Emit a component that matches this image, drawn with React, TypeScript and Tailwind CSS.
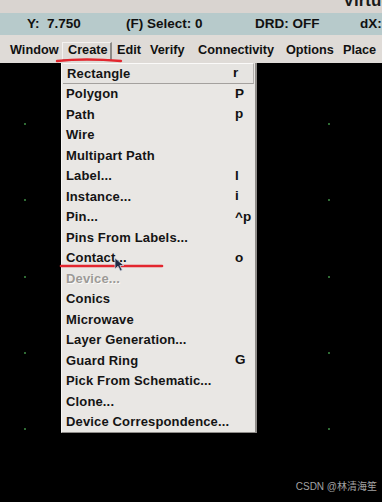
import React from "react";

type Item = { label: string; key?: string; disabled?: boolean; active?: boolean };

const items: Item[] = [
  { label: "Rectangle", key: "r", active: true },
  { label: "Polygon", key: "P" },
  { label: "Path", key: "p" },
  { label: "Wire" },
  { label: "Multipart Path" },
  { label: "Label...", key: "l" },
  { label: "Instance...", key: "i" },
  { label: "Pin...", key: "^p" },
  { label: "Pins From Labels..." },
  { label: "Contact...", key: "o" },
  { label: "Device...", disabled: true },
  { label: "Conics" },
  { label: "Microwave" },
  { label: "Layer Generation..." },
  { label: "Guard Ring", key: "G" },
  { label: "Pick From Schematic..." },
  { label: "Clone..." },
  { label: "Device Correspondence..." },
];

const dotsX = [24, 328];
const dotsY = [123, 199, 276, 352, 428];

const App: React.FC = () => {
  return (
    <div className="relative w-[382px] h-[502px] overflow-hidden bg-black font-['Liberation_Sans',Arial,sans-serif] font-bold text-[#111]">
      {/* title strip */}
      <div className="h-[13px] bg-[#d9d4d0] overflow-hidden">
        <div className="ml-[343px] -mt-[9px] whitespace-nowrap text-[17px] leading-[20px] text-[#1a1a1a]">Virtuoso</div>
      </div>

      {/* status line */}
      <div className="flex items-center h-[22px] bg-[#b7cacb] pl-[27px] text-[13.5px] whitespace-nowrap overflow-hidden">
        <span className="w-[99px] shrink-0">Y: &nbsp;7.750</span>
        <span className="w-[129px] shrink-0">(F) Select: 0</span>
        <span className="w-[105px] shrink-0">DRD: OFF</span>
        <span className="shrink-0">dX:</span>
      </div>

      {/* menu bar */}
      <div className="flex items-center h-[28px] bg-[#dfdbd7] pl-[10px] pt-[4px] text-[12.7px] whitespace-nowrap">
        <span className="w-[52px] shrink-0">Window</span>
        <span className="w-[50px] h-[18px] shrink-0 flex items-center pl-[5px] border-t border-l border-[#f4f2f0] border-r-2 border-r-[#8d8a87] border-b border-b-[#9c9996]">Create</span>
        <span className="ml-[5px] w-[33px] shrink-0">Edit</span>
        <span className="w-[48px] shrink-0">Verify</span>
        <span className="w-[88px] shrink-0">Connectivity</span>
        <span className="w-[57px] shrink-0">Options</span>
        <span className="shrink-0">Place</span>
      </div>

      {/* canvas grid dots */}
      {dotsY.map((y) =>
        dotsX.map((x) => (
          <div key={`${x}-${y}`} className="absolute w-[2px] h-[2px] bg-[#2f6a34]" style={{ left: x, top: y }} />
        ))
      )}

      {/* red annotation under Create */}
      <svg className="absolute left-[55px] top-[56px]" width="68" height="8" viewBox="0 0 68 8">
        <path d="M2 5 Q 30 2 66 5" stroke="#e3262e" strokeWidth="2.4" fill="none" strokeLinecap="round" />
      </svg>

      {/* Create dropdown */}
      <div className="absolute left-[61px] top-[63px] w-[196px] bg-[#e9e7e4] border-l border-[#f6f5f3] border-r-2 border-r-[#8f8c89] border-b border-b-[#8f8c89] text-[13px]">
        {items.map((it) => (
          <div
            key={it.label}
            className={
              "flex items-center h-[20.5px] pl-[4px] whitespace-nowrap " +
              (it.active
                ? "bg-[#e6e4e1] border-t border-[#fbfaf9] border-b border-b-[#a4a19e] border-r border-r-[#b3b0ad] mx-[1px]"
                : "")
            }
          >
            <span
              className={
                "flex-1 tracking-[0.15px] " +
                (it.disabled ? "text-[#9c9a97] [text-shadow:1px_1px_0_#fbfaf8]" : "text-[#141414]")
              }
            >
              {it.label}
            </span>
            <span className="w-[20px] shrink-0 text-[13.5px]">{it.key ?? ""}</span>
          </div>
        ))}
      </div>

      {/* red annotation under Contact */}
      <svg className="absolute left-[59px] top-[263px]" width="106" height="6" viewBox="0 0 106 6">
        <path d="M2 3 L 103 3" stroke="#e3262e" strokeWidth="2.6" fill="none" strokeLinecap="round" />
      </svg>

      {/* mouse cursor */}
      <svg className="absolute left-[114px] top-[257px]" width="12" height="15" viewBox="0 0 12 15">
        <path d="M1 1 L1 12 L4 9.2 L6.4 14 L8.2 13.1 L5.9 8.5 L9.8 8.5 Z" fill="#1e2a44" stroke="#cfd3dc" strokeWidth="0.8" />
      </svg>

      {/* watermark */}
      <div className="absolute right-[5px] bottom-[8px] font-normal text-[10px] text-[#a3a3a3] font-['Liberation_Sans','Noto_Sans_CJK_SC',sans-serif]">
        CSDN @林清海笙
      </div>
    </div>
  );
};

export default App;
